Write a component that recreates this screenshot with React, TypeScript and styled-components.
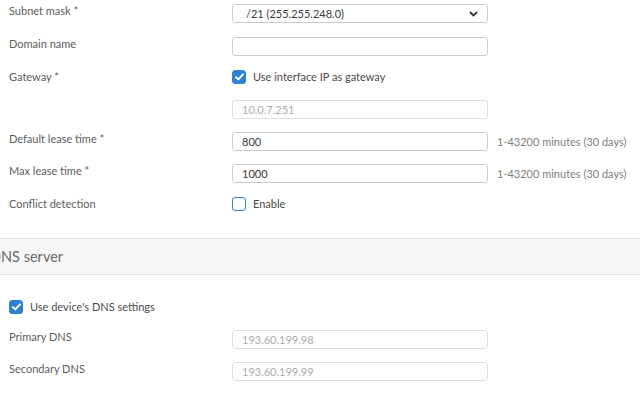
import React from "react";
import styled, { createGlobalStyle } from "styled-components";

const GlobalStyle = createGlobalStyle`
  html, body {
    margin: 0;
    padding: 0;
    background: #ffffff;
    font-family: "Lato", "Open Sans", sans-serif;
    overflow: hidden;
  }
`;

const Page = styled.div`
  width: 640px;
  height: 396px;
  overflow: hidden;
  background: #ffffff;
`;

const Form = styled.div<{ $top?: number }>`
  display: flex;
  flex-direction: column;
  padding: ${(p) => p.$top ?? 4}px 0 0 9px;
`;

const Row = styled.div<{ $mt?: number }>`
  display: flex;
  align-items: flex-start;
  margin-top: ${(p) => p.$mt ?? 0}px;
`;

const Label = styled.div`
  width: 223px;
  flex-shrink: 0;
  font-size: 11px;
  line-height: 14px;
  color: #5c5c5c;
`;

const Control = styled.div`
  width: 256px;
  flex-shrink: 0;
`;

const Input = styled.div<{ $disabled?: boolean; $pad?: number }>`
  box-sizing: border-box;
  height: 19px;
  border: 1px solid ${(p) => (p.$disabled ? "#dcdee2" : "#c8cacd")};
  border-radius: 3px;
  padding: 0 9px 0 ${(p) => p.$pad ?? 9}px;
  font-size: 11px;
  line-height: 17px;
  color: ${(p) => (p.$disabled ? "#a9acb0" : "#3a3a3a")};
  display: flex;
  align-items: center;
  justify-content: space-between;
  background: #ffffff;
`;

const Hint = styled.div`
  margin-left: 9px;
  font-size: 11px;
  line-height: 19px;
  color: #808080;
  white-space: nowrap;
`;

const Check = styled.label`
  display: flex;
  align-items: center;
  gap: 7px;
  font-size: 11px;
  line-height: 14px;
  color: #4a4a4a;
`;

const Box = styled.span<{ $checked?: boolean }>`
  box-sizing: border-box;
  width: 14px;
  height: 14px;
  border-radius: 3px;
  border: 1.5px solid #2f82d1;
  background: ${(p) => (p.$checked ? "#2f82d1" : "#ffffff")};
  display: flex;
  align-items: center;
  justify-content: center;
`;

const SectionHeader = styled.div`
  margin-top: 27px;
  height: 37px;
  box-sizing: border-box;
  border-top: 1px solid #e3e3e3;
  border-bottom: 1px solid #e3e3e3;
  background: #f7f7f7;
  display: flex;
  align-items: center;
  overflow: hidden;
`;

const SectionTitle = styled.div`
  margin-left: -10px;
  font-size: 14.5px;
  color: #6a6a6a;
  white-space: nowrap;
`;

const CheckboxMark = () => (
  <svg width="9" height="8" viewBox="0 0 9 8">
    <path d="M1 4.2 L3.4 6.4 L8 1.4" fill="none" stroke="#ffffff" strokeWidth="1.9" strokeLinecap="round" strokeLinejoin="round" />
  </svg>
);

const Chevron = () => (
  <svg width="9" height="6" viewBox="0 0 9 6">
    <path d="M1 1 L4.5 4.5 L8 1" fill="none" stroke="#333" strokeWidth="1.8" />
  </svg>
);

const Checkbox = ({ checked, label }: { checked?: boolean; label: string }) => (
  <Check>
    <Box $checked={checked}>{checked && <CheckboxMark />}</Box>
    {label}
  </Check>
);

export default function App() {
  return (
    <Page>
      <GlobalStyle />
      <Form>
        <Row>
          <Label>Subnet mask *</Label>
          <Control>
            <Input $pad={13}>
              /21 (255.255.248.0)
              <Chevron />
            </Input>
          </Control>
        </Row>
        <Row $mt={14}>
          <Label>Domain name</Label>
          <Control>
            <Input />
          </Control>
        </Row>
        <Row $mt={14}>
          <Label>Gateway *</Label>
          <Control>
            <Checkbox checked label="Use interface IP as gateway" />
          </Control>
        </Row>
        <Row $mt={16}>
          <Label />
          <Control>
            <Input $disabled>10.0.7.251</Input>
          </Control>
        </Row>
        <Row $mt={13}>
          <Label>Default lease time *</Label>
          <Control>
            <Input>800</Input>
          </Control>
          <Hint>1-43200 minutes (30 days)</Hint>
        </Row>
        <Row $mt={13}>
          <Label>Max lease time *</Label>
          <Control>
            <Input>1000</Input>
          </Control>
          <Hint>1-43200 minutes (30 days)</Hint>
        </Row>
        <Row $mt={14}>
          <Label>Conflict detection</Label>
          <Control>
            <Checkbox label="Enable" />
          </Control>
        </Row>
      </Form>
      <SectionHeader>
        <SectionTitle>DNS server</SectionTitle>
      </SectionHeader>
      <Form $top={25}>
        <Row>
          <Checkbox checked label="Use device's DNS settings" />
        </Row>
        <Row $mt={16}>
          <Label>Primary DNS</Label>
          <Control>
            <Input $disabled>193.60.199.98</Input>
          </Control>
        </Row>
        <Row $mt={13}>
          <Label>Secondary DNS</Label>
          <Control>
            <Input $disabled>193.60.199.99</Input>
          </Control>
        </Row>
      </Form>
    </Page>
  );
}
